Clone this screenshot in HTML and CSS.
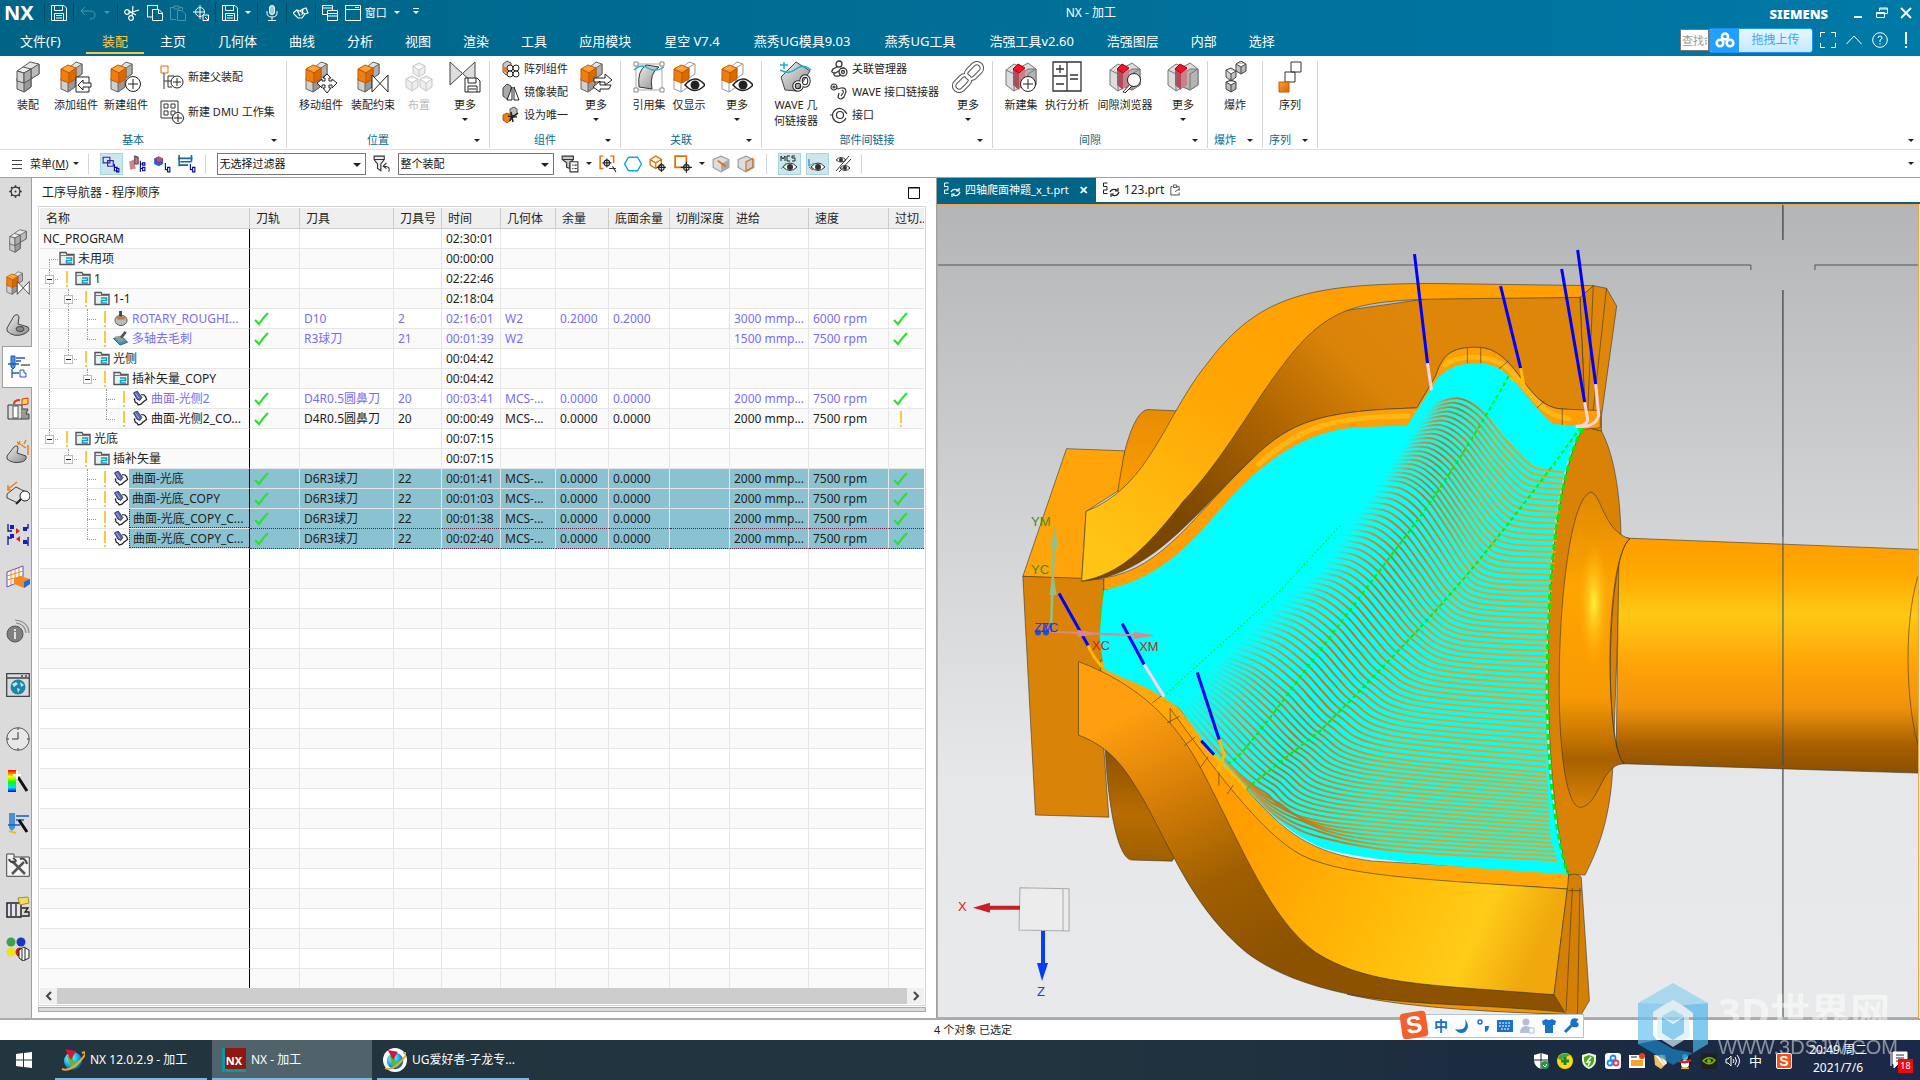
FILE: index.html
```html
<!DOCTYPE html>
<html lang="zh-CN">
<head>
<meta charset="utf-8">
<title>NX - 加工</title>
<link rel="stylesheet" href="styles.css">
</head>
<body>
<svg class="defs" aria-hidden="true">
  <defs>
    <linearGradient id="gOr" x1="0" y1="0" x2="1" y2="1"><stop offset="0" stop-color="#ffa030"/><stop offset="1" stop-color="#d96400"/></linearGradient>
    <linearGradient id="gGr" x1="0" y1="0" x2="1" y2="1"><stop offset="0" stop-color="#eee"/><stop offset="1" stop-color="#8c8c8c"/></linearGradient>
    <linearGradient id="gRain" x1="0" y1="0" x2="0" y2="1"><stop offset="0" stop-color="#f00"/><stop offset=".3" stop-color="#ff0"/><stop offset=".55" stop-color="#0f0"/><stop offset=".8" stop-color="#0df"/><stop offset="1" stop-color="#00f"/></linearGradient>
    <radialGradient id="gBall" cx=".35" cy=".3" r=".8"><stop offset="0" stop-color="#b8f4ff"/><stop offset=".5" stop-color="#18b4f0"/><stop offset="1" stop-color="#0a3c9c"/></radialGradient>
  </defs>
  <symbol id="cubes" viewBox="0 0 32 32"><g stroke="#555" stroke-width="1" stroke-linejoin="round"><path fill="#e6e6e6" d="M11 6 18 1 27 3 27 13 18 18 11 14z"/><path fill="#bbb" d="M19 8 27 3V13L19 18z"/><path fill="#c8c8c8" d="M5 17 12 19 19 16V26L12 31 5 28z"/><path fill="#999" d="M12 20 19 16V26L12 31z"/><path fill="#eee" d="M5 10 11 6 19 8 12 12z"/><path fill="#d4d4d4" d="M5 10 12 12V22L5 20z"/><path fill="#aaa" d="M12 12 19 8V18L12 22z"/></g></symbol>
  <symbol id="cubeso" viewBox="0 0 32 32"><g stroke="#666" stroke-width="1" stroke-linejoin="round"><path fill="#e2e2e2" d="M10 6 16 1 22 3 22 13 16 17 10 14z"/><path fill="#b0b0b0" d="M16 7 22 3V13L16 17z"/><path fill="#d0d0d0" d="M1 17 8 19 15 16V26L8 31 1 28z"/><path fill="#999" d="M8 20 15 16V26L8 31z"/><path fill="#ffa23c" stroke="#c45a00" d="M1 8 8 4 16 7 9 12z"/><path fill="#ef7d10" stroke="#c45a00" d="M1 8 9 12V22L1 19z"/><path fill="#d96a00" stroke="#c45a00" d="M9 12 16 7V18L9 22z"/></g></symbol>
  <symbol id="cubesl" viewBox="0 0 32 32"><g stroke="#999" fill="#fff" stroke-linejoin="round"><path d="M10 6 16 1 22 3 22 13 16 17 10 14zM16 6V17M16 6 22 3M1 17 8 19 15 16V26L8 31 1 28zM8 20V31"/><path fill="#ffa23c" stroke="#c45a00" d="M1 8 8 4 16 7 9 12z"/><path fill="#ef7d10" stroke="#c45a00" d="M1 8 9 12V22L1 19z"/><path fill="#d96a00" stroke="#c45a00" d="M9 12 16 7V18L9 22z"/></g></symbol>
  <symbol id="plus" viewBox="0 0 32 32"><circle cx="23" cy="23" r="7.500" fill="#fff" stroke="#222"/><path d="M23 18V28M18 23H28" stroke="#222" fill="none"/></symbol>
  <symbol id="inarrow" viewBox="0 0 32 32"><path d="M16 16H29V31H16z" fill="#fff" stroke="#222"/><path d="M18 24 23 19V22H31V26H23V29z" fill="#fff" stroke="#222"/></symbol>
  <symbol id="move" viewBox="0 0 32 32"><path d="M22 13 26 17H24V20H27V18L32 22 27 27V24H24V27H26L22 32 18 27H20V24H17V27L12 22 17 18V20H20V17H18z" fill="#fff" stroke="#222"/></symbol>
  <symbol id="bow" viewBox="0 0 32 32"><path d="M15 14V31L31 14V31z" fill="#fff" stroke="#222"/></symbol>
  <symbol id="swap" viewBox="0 0 32 32"><path d="M14 17H25V13L32 19 25 24V21H14zM31 24H20V20L13 26 20 31V28H29z" fill="#fff" stroke="#222"/></symbol>
  <symbol id="eye" viewBox="0 0 32 32"><path d="M12 24Q22 12 32 24 22 35 12 24z" fill="#fff" stroke="#222" stroke-width="1.500"/><circle cx="22" cy="24" r="4.500" fill="#222"/></symbol>
  <symbol id="ghost" viewBox="0 0 32 32"><g fill="#eee" stroke="#c6c6c6"><path d="M16 2 22 5V12L16 16 10 12V5zM9 15 15 18V26L9 30 3 26V18zM23 15 29 18V26L23 30 17 26V18zM10 5 16 9 22 5M16 9V16M3 18 9 22 15 18M9 22V30M17 18 23 22 29 18M23 22V30"/></g></symbol>
  <symbol id="bowsave" viewBox="0 0 32 32"><path d="M1 1V24L26 1V24z" fill="#ddd" stroke="#444"/><path d="M16 17H28L31 20V31H16z" fill="#fff" stroke="#222"/><path d="M19 17V22H27V17M19 31V25H28V31M20 28H27" fill="none" stroke="#222"/></symbol>
  <symbol id="parent" viewBox="0 0 24 24"><path d="M1 1H8V8H1z" fill="#fff" stroke="#e07000"/><path d="M4 8V24M4 16H8M8 11H14V16M8 11V22H12M8 16H14" fill="none" stroke="#333"/><circle cx="17" cy="17" r="6" fill="#fff" stroke="#222"/><path d="M17 13V21M13 17H21" stroke="#222"/></symbol>
  <symbol id="dmu" viewBox="0 0 24 24"><path d="M1 1H18V18H1zM4 4H8V8H4zM11 4H15V8H11zM4 11H8V15H4zM11 11H15V15H11z" fill="#fff" stroke="#333"/><circle cx="18" cy="18" r="5.500" fill="#fff" stroke="#222"/><path d="M18 14V22M14 18H22" stroke="#222"/></symbol>
  <symbol id="pattern" viewBox="0 0 18 18"><path d="M1 4 5 1 9 3V13L4 15 1 12z" fill="#ccc" stroke="#555"/><path d="M1 6 5 8V13L1 11z" fill="#ef7d10"/><g fill="#fff" stroke="#222"><circle cx="8" cy="8" r="3"/><circle cx="14" cy="8" r="3"/><circle cx="8" cy="14" r="3"/><circle cx="14" cy="14" r="3"/></g></symbol>
  <symbol id="mirror" viewBox="0 0 18 18"><path d="M1 5 5 1 9 3V13L5 16 1 13z" fill="#aaa" stroke="#444"/><path d="M10 4V17H5zM12 4V17H17z" fill="#fff" stroke="#222"/></symbol>
  <symbol id="uniq" viewBox="0 0 18 18"><path d="M8 3 12 1 15 3V8L11 10 8 8z" fill="#bbb" stroke="#555"/><path d="M1 9 5 7 9 9V14L5 17 1 14z" fill="#ef7d10" stroke="#b55300"/><path d="M6 10Q11 12 16 7M9 6 11 16M15 11Q9 10 8 15" fill="none" stroke="#222" stroke-width="1.500"/></symbol>
  <symbol id="refset" viewBox="0 0 32 32"><path d="M3 3H29V29H3z" fill="none" stroke="#aaa"/><path d="M6 26Q4 10 13 4L26 6Q16 12 19 28z" fill="url(#gGr)" stroke="#333"/><path d="M1 9Q8 2 15 7T31 6" fill="none" stroke="#1ab0d0" stroke-width="1.500"/><path d="M1 1H5V5H1zM27 1H31V5H27zM1 27H5V31H1zM27 27H31V31H27z" fill="#fff" stroke="#888"/></symbol>
  <symbol id="wave" viewBox="0 0 32 32"><path d="M1 16 16 1 30 10 17 30 5 29z" fill="url(#gGr)" stroke="#444"/><path d="M0 9Q9 14 16 8T31 9M4 1V8M0 4H8" fill="none" stroke="#1ab0d0" stroke-width="1.500"/><g fill="none" stroke="#222" stroke-width="3.500"><ellipse cx="25" cy="20" rx="4" ry="5"/><ellipse cx="18" cy="25" rx="4" ry="4"/></g><g fill="none" stroke="#fff" stroke-width="1.500"><ellipse cx="25" cy="20" rx="4" ry="5"/><ellipse cx="18" cy="25" rx="4" ry="4"/></g></symbol>
  <symbol id="chain" viewBox="0 0 32 32"><g fill="none" stroke="#555" stroke-width="4.500"><rect x="1" y="17" width="18" height="10" rx="5" transform="rotate(-45 10 22)"/><rect x="13" y="5" width="18" height="10" rx="5" transform="rotate(-45 22 10)"/></g><g fill="none" stroke="#fff" stroke-width="2.500"><rect x="1" y="17" width="18" height="10" rx="5" transform="rotate(-45 10 22)"/><rect x="13" y="5" width="18" height="10" rx="5" transform="rotate(-45 22 10)"/></g></symbol>
  <symbol id="link1" viewBox="0 0 18 18"><g fill="none" stroke="#333" stroke-width="1.300"><circle cx="9" cy="4" r="3"/><path d="M7 7 3 9Q0 13 5 13L9 11M4 13Q3 17 9 16L11 14"/><circle cx="13" cy="12" r="4"/><circle cx="13" cy="12" r="1.500"/></g></symbol>
  <symbol id="link2" viewBox="0 0 18 18"><g fill="none" stroke="#333" stroke-width="1.200"><circle cx="4" cy="4" r="3"/><circle cx="4" cy="4" r="1"/><path d="M7 6 11 5Q16 4 16 9L14 14Q10 18 8 14L9 10M12 7Q14 8 13 10L11 13"/></g></symbol>
  <symbol id="link3" viewBox="0 0 18 18"><g fill="none" stroke="#333" stroke-width="1.200"><path d="M16 7A7 7 0 1 0 16 12M0 9H3M15 5 17 8"/><circle cx="10" cy="9" r="3.500"/></g></symbol>
  <symbol id="clear" viewBox="0 0 32 32"><g stroke="#777" stroke-linejoin="round"><path fill="#ddd" d="M1 9 9 3 16 6 23 2 31 8V24L23 29 16 26 9 30 1 24z"/><path fill="#b4b4b4" d="M16 13 23 8 31 8V24L23 29 16 26z"/><path fill="#b44a55" stroke="none" d="M8 8 14 12V29L8 24z"/><path fill="#c8808a" stroke="none" d="M14 12 20 8V24L14 28z"/><path fill="#f4122c" stroke="#a00" d="M8 8 13 3 20 7 14 12z"/><path fill="none" d="M1 9 9 13V30M31 8 23 13V29"/></g></symbol>
  <symbol id="calc" viewBox="0 0 32 32"><path d="M2 1H30V30H2zM16 1V30M2 15H16M5 8H13M9 4V12M5 23H13M19 14H27M19 18H27" fill="none" stroke="#333" stroke-width="1.300"/></symbol>
  <symbol id="mag" viewBox="0 0 32 32"><path d="M22 22 14 31 16 32 24 24z" fill="#fff" stroke="#222"/><circle cx="25" cy="19" r="6.500" fill="#fff" stroke="#222"/></symbol>
  <symbol id="explode" viewBox="0 0 32 32"><g fill="url(#gGr)" stroke="#444"><path d="M17 3 22 0 27 3V10L22 13 17 10zM7 9 12 7 17 10V16L12 20 7 16zM7 21 12 19 17 21V28L12 31 7 28zM17 3 22 6 27 3M22 6V13M7 9 12 13 17 10M12 13V20M7 21 12 24 17 21M12 24V31"/></g></symbol>
  <symbol id="seq" viewBox="0 0 32 32"><path d="M17 1H27V11H17zM11 11H21V21H11z" fill="#fff" stroke="#333"/><path d="M5 21H15V31H5z" fill="url(#gOr)" stroke="#c45a00"/></symbol>

  <symbol id="save" viewBox="0 0 16 16"><path d="M.5.5H13L15.500 3V15.500H.5zM3.500.5V5.500H11.500V.5M3.500 15.500V8.500H12.500V15.500M5 10.500H11M5 13H11" fill="none" stroke="currentColor"/></symbol>
  <symbol id="undo" viewBox="0 0 16 16"><path d="M5 2 1 6 5 10M1 6H10Q15 6 15 10T10 14" fill="none" stroke="currentColor"/></symbol>
  <symbol id="cut" viewBox="0 0 16 16"><g fill="none" stroke="currentColor" stroke-width="1.200"><circle cx="3" cy="7" r="2.300"/><circle cx="7" cy="13" r="2.300"/><path d="M5 8 15 5M8 11 9 1M5 6 12 10"/></g></symbol>
  <symbol id="copy" viewBox="0 0 16 16"><path d="M10.500 4V.5H.5V12H5M5.500 4.500H12L15.500 8V15.500H5.500zM11.500 4.500V8.500H15" fill="none" stroke="currentColor"/></symbol>
  <symbol id="paste" viewBox="0 0 16 16"><path d="M4 2.500H.5V14.500H6M12.500 5V2.500H9M4 1H9V4H4zM7.500 5.500H12L15.500 9V15.500H7.500z" fill="none" stroke="currentColor"/></symbol>
  <symbol id="aim" viewBox="0 0 16 16"><g fill="none" stroke="currentColor"><circle cx="7" cy="7" r="4.500"/><path d="M7 0V14M0 7H11M10 10H15.500V15.500H10zM12 12 15 15"/></g></symbol>
  <symbol id="mic" viewBox="0 0 16 16"><rect x="5.500" y=".5" width="5" height="9" rx="2.500" fill="#9cc" stroke="currentColor"/><path d="M3 6V8Q3 12 8 12T13 8V6M8 12V15M4 15.500H12" fill="none" stroke="currentColor"/></symbol>
  <symbol id="touch" viewBox="0 0 16 16"><path d="M0 8 4 5 7 6 10 4 13 3 15 8 12 9 9 13H5L3 11zM4 5 7 11M7 6 12 9M10 4 9 10" fill="none" stroke="currentColor" stroke-width="1.200"/></symbol>
  <symbol id="wins" viewBox="0 0 16 16"><path d="M5 9.500H.5V.5H10.500V5M.5 3H10.500M5.500 5.500H15.500V15.500H5.500zM5.500 8.500H15.500M5.500 11H15.500" fill="none" stroke="currentColor"/></symbol>
  <symbol id="win" viewBox="0 0 16 16"><path d="M.5.5H15.500V15.500H.5zM.5 4.500H15.500M10 2.500H14" fill="none" stroke="currentColor"/></symbol>
  <symbol id="folder" viewBox="0 0 16 14"><path d="M1 13V1H7L8 3H15V13z" fill="#eceff0" stroke="#555" stroke-width="1.400"/><path d="M1 4H15" stroke="#777"/><path d="M7 6.500H12.500V9H7.500V11.500H13" fill="none" stroke="#0aa2c0" stroke-width="1.500"/></symbol>
  <symbol id="op" viewBox="0 0 16 16"><path d="M3 8 2 9 3 12 5 13 6 15 9 14 11 12 15 9 14 6 12 4 9 4" fill="#fff" stroke="#222" stroke-width="1.300"/><path d="M1 2 5 0 10 7 8 10 5 9z" fill="#5a66c0" stroke="#223" stroke-width=".8"/><path d="M3 2 7 8" stroke="#a8b4f0"/></symbol>
  <symbol id="rough" viewBox="0 0 16 16"><ellipse cx="8" cy="10" rx="6.500" ry="5.500" fill="#bbb" stroke="#555"/><path d="M3 6H13L12 9H4z" fill="#c87838"/><path d="M6 0H9V6H6z" fill="#444"/></symbol>
  <symbol id="burr" viewBox="0 0 16 16"><path d="M0 8 9 6 15 12 7 15z" fill="#2a9fbe" stroke="#357"/><path d="M1 6 7 5 12 10 6 12z" fill="#999"/><path d="M8 7 13 1" stroke="#555" stroke-width="3"/></symbol>
  <symbol id="check" viewBox="0 0 16 14"><path d="M1 8 5 12Q9 6 14 1" fill="none" stroke="#2de02d" stroke-width="2.200"/></symbol>
  <symbol id="bang" viewBox="0 0 4 16"><path d="M1 0H3V12H1zM1 14H3V16H1z" fill="#fdc83c"/></symbol>
  <symbol id="prt" viewBox="0 0 18 16"><path d="M5.500 1H1.500V4.500H5V8H1.500M1.500 8V11.500H5.500" fill="none" stroke="currentColor"/><path d="M8 10Q10 6 15 8M16 6V9H13M17 10Q15 15 10 13M9 15V12H12" fill="none" stroke="currentColor" stroke-width="1.200"/></symbol>
  <symbol id="globe" viewBox="0 0 24 24"><circle cx="12" cy="13" r="9" fill="url(#gBall)"/><path d="M6 8Q12 5 12 10T18 13 14 20Q8 20 8 14z" fill="#55b948"/><path d="M1 21Q9 24 19 13T21 5" fill="none" stroke="#f5a623" stroke-width="2"/><path d="M4 1 15 3 10 12z" fill="#d4163c"/></symbol>

  <symbol id="t1" viewBox="0 0 16 16"><path d="M1 2H7V7H1zM5 5H10V10H5z" fill="#dcdcff" stroke="#2a2a9c"/><path d="M11 8V14H14M11 11H14M13 12H15V15H13z" fill="none" stroke="#0a0a9c"/></symbol>
  <symbol id="t2" viewBox="0 0 16 16"><path d="M1 6 5 4 7 12 2 13z" fill="#c88"/><path d="M6 1 9 2V8H6z" fill="#ef7d10" stroke="#448"/><path d="M11 5V15M11 8H13M11 12H13M13 7H15V9H13zM13 11H15V14H13z" fill="none" stroke="#0a0a9c"/></symbol>
  <symbol id="t3" viewBox="0 0 16 16"><path d="M1 3 5 1 9 3V8L5 10 1 8z" fill="#4455cc"/><path d="M3 2 7 2 8 5 4 6z" fill="#e05030"/><path d="M11 7V13H13M13 11H15V15H13z" fill="none" stroke="#0a0a9c"/></symbol>
  <symbol id="t4" viewBox="0 0 16 16"><path d="M1 0V10M12 0V6M0 3H13M2 6H12M1 9H9" fill="none" stroke="#15699c" stroke-width="1.400"/><path d="M11 8V13H13M13 11H15V15H13z" fill="none" stroke="#0a0a9c"/></symbol>
  <symbol id="fun" viewBox="0 0 16 16"><path d="M1 1H10V4L7 8V14L4 12V8L1 4zM1 4H10" fill="#eee" stroke="#333"/><path d="M14 15Q16 10 10 10M12 7 9 10 12 12" fill="none" stroke="#333"/></symbol>
  <symbol id="fun2" viewBox="0 0 16 16"><path d="M1 1H11V4L8 7V12L5 11V7L1 4zM1 4H11" fill="#ccc" stroke="#333"/><path d="M8 6H15V15H8zM10 9H11M12 9H14M10 12H11M12 12H14" fill="#fff" stroke="#333"/></symbol>
  <symbol id="bra" viewBox="0 0 16 16"><path d="M4 1H1V12H4M10 1H13V7" fill="none" stroke="#e07000" stroke-width="1.300"/><path d="M7 3V11M3 7H11" stroke="#222"/><circle cx="7" cy="7" r="2.500" fill="none" stroke="#222"/><path d="M9 12H15M12 10 15 15" fill="none" stroke="#333"/></symbol>
  <symbol id="hex" viewBox="0 0 16 16"><path d="M4 2H12L15.500 8 12 14H4L.5 8z" fill="none" stroke="#10a8d8" stroke-width="1.300"/></symbol>
  <symbol id="obox" viewBox="0 0 16 16"><path d="M1 4 6 1 11 4V9L6 12 1 9zM1 4 6 7 11 4M6 7V12" fill="#fff" stroke="#e07000" stroke-width="1.200"/><path d="M11 7V15M7 11H15" stroke="#222"/><circle cx="11" cy="11" r="2.500" fill="none" stroke="#222"/></symbol>
  <symbol id="osq" viewBox="0 0 16 16"><path d="M1 1H11V11H1z" fill="#fff" stroke="#e07000" stroke-width="1.500"/><path d="M11 6V16M6 11H16" stroke="#222"/><circle cx="11" cy="11" r="2.500" fill="none" stroke="#222"/></symbol>
  <symbol id="gbox" viewBox="0 0 16 16"><path d="M1 4 8 1 15 4V11L8 15 1 11z" fill="#ddd" stroke="#999"/><path d="M8 8 15 4V11L8 15z" fill="#aaa"/><path d="M5 5 12 10" stroke="#e07000" stroke-width="1.500"/></symbol>
  <symbol id="gbox2" viewBox="0 0 16 16"><path d="M1 4 8 1 15 4V11L8 15 1 11z" fill="#ddd" stroke="#999"/><path d="M8 6 14 3V11L8 14z" fill="#ccc" stroke="#d07030"/></symbol>
  <symbol id="seye" viewBox="0 0 18 18"><path d="M3 12Q10 4 17 12 10 19 3 12z" fill="#fff" stroke="#333"/><circle cx="10" cy="12" r="3" fill="#333"/></symbol>
</svg>

<header class="top">
  <div class="titlebar">
    <div class="quick">
      <b class="nx">NX</b><i class="vs"></i>
      <button aria-label="保存"><svg><use href="#save"/></svg></button><i class="vs"></i>
      <button class="dim" aria-label="撤销"><svg><use href="#undo"/></svg></button><i class="car dim"></i><i class="vs"></i>
      <button aria-label="剪切"><svg><use href="#cut"/></svg></button><button aria-label="复制"><svg><use href="#copy"/></svg></button><button class="dim" aria-label="粘贴"><svg><use href="#paste"/></svg></button><button aria-label="定位"><svg><use href="#aim"/></svg></button><i class="vs"></i>
      <button aria-label="保存列表"><svg><use href="#save"/></svg></button><i class="car"></i><i class="vs"></i>
      <button aria-label="语音"><svg><use href="#mic"/></svg></button><i class="vs"></i>
      <button aria-label="触控"><svg><use href="#touch"/></svg></button><i class="vs"></i>
      <button aria-label="切换窗口"><svg><use href="#wins"/></svg></button><button class="wtext"><svg><use href="#win"/></svg>窗口</button><i class="car"></i><i class="car bar"></i>
    </div>
    <h1>NX - 加工</h1>
    <div class="wincontrols">
      <b class="siemens">SIEMENS</b>
      <button aria-label="最小化"><svg viewBox="0 0 12 12"><path d="M2 10H10" stroke="#fff" stroke-width="2"/></svg></button>
      <button aria-label="还原"><svg viewBox="0 0 12 12"><path d="M3.500 4V1H11.500V6.500H9M.5 5.500H8.500V10.500H.5zM.5 6.500H8.500M3.500 2H11.500" fill="none" stroke="#fff"/></svg></button>
      <button aria-label="关闭"><svg viewBox="0 0 12 12"><path d="M1 1 11 11M11 1 1 11" stroke="#fff" stroke-width="1.800"/></svg></button>
    </div>
  </div>
  <div class="menurow">
    <nav>
      <a href="#" class="file">文件(F)</a><a href="#" class="on">装配</a><a href="#">主页</a><a href="#">几何体</a><a href="#">曲线</a><a href="#">分析</a><a href="#">视图</a><a href="#">渲染</a><a href="#">工具</a><a href="#">应用模块</a><a href="#" class="mix">星空 V7.4</a><a href="#" class="mix">燕秀UG模具9.03</a><a href="#" class="mix">燕秀UG工具</a><a href="#" class="mix">浩强工具v2.60</a><a href="#">浩强图层</a><a href="#">内部</a><a href="#">选择</a>
    </nav>
    <div class="tools">
      <input class="find" type="text" placeholder="查找命令" aria-label="查找命令">
      <button class="upload"><span class="cloud"><svg viewBox="0 0 20 16"><g fill="none" stroke="#fff" stroke-width="2.600"><circle cx="10" cy="4.500" r="3"/><circle cx="5" cy="11" r="3.300"/><circle cx="15" cy="11" r="3.300"/></g></svg></span><span class="uptext">拖拽上传</span></button>
      <button aria-label="全屏"><svg viewBox="0 0 16 16"><path d="M.5 5V.5H5M11 .5H15.500V5M15.500 11V15.500H11M5 15.500H.5V11" fill="none" stroke="#fff"/></svg></button>
      <button aria-label="折叠"><svg viewBox="0 0 16 16"><path d="M.5 12 8 4 15.500 12" fill="none" stroke="#fff"/></svg></button>
      <button aria-label="帮助"><svg viewBox="0 0 16 16"><circle cx="8" cy="8" r="7.300" fill="none" stroke="#fff"/><path d="M6 6Q6 4 8 4T10 6Q10 7 8 8V10M8 11V12.500" fill="none" stroke="#fff"/></svg></button>
      <button aria-label="提示"><svg viewBox="0 0 16 16"><path d="M7 0H9V12H7zM7 14H9V16H7z" fill="#fff"/></svg></button>
    </div>
  </div>
</header>

<section class="ribbon">
  <div class="grp g1"><div class="body">
    <button class="b s"><svg><use href="#cubes"/></svg>装配</button>
    <button class="b s"><svg><use href="#cubeso"/><use href="#inarrow"/></svg>添加组件</button>
    <button class="b"><svg><use href="#cubeso"/><use href="#plus"/></svg>新建组件</button>
    <div class="list two"><button><svg><use href="#parent"/></svg>新建父装配</button><button><svg><use href="#dmu"/></svg>新建 DMU 工作集</button></div>
  </div><div class="cap"><span>基本</span><i class="car"></i></div></div>
  <div class="grp g2"><div class="body">
    <button class="b"><svg><use href="#cubeso"/><use href="#move"/></svg>移动组件</button>
    <button class="b"><svg><use href="#cubeso"/><use href="#bow"/></svg>装配约束</button>
    <button class="b n off" disabled><svg><use href="#ghost"/></svg>布置</button>
    <button class="b more"><svg><use href="#bowsave"/></svg>更多<i class="car"></i></button>
  </div><div class="cap"><span>位置</span><i class="car"></i></div></div>
  <div class="grp g3"><div class="body">
    <div class="list"><button><svg><use href="#pattern"/></svg>阵列组件</button><button><svg><use href="#mirror"/></svg>镜像装配</button><button><svg><use href="#uniq"/></svg>设为唯一</button></div>
    <button class="b more"><svg><use href="#cubeso"/><use href="#swap"/></svg>更多<i class="car"></i></button>
  </div><div class="cap"><span>组件</span><i class="car"></i></div></div>
  <div class="grp g4"><div class="body">
    <button class="b n"><svg><use href="#refset"/></svg>引用集</button>
    <button class="b n"><svg><use href="#cubesl"/><use href="#eye"/></svg>仅显示</button>
    <button class="b more"><svg><use href="#cubesl"/><use href="#eye"/></svg>更多<i class="car"></i></button>
  </div><div class="cap"><span>关联</span><i class="car"></i></div></div>
  <div class="grp g5"><div class="body">
    <button class="b"><svg><use href="#wave"/></svg>WAVE 几<br>何链接器</button>
    <div class="list"><button><svg><use href="#link1"/></svg>关联管理器</button><button><svg><use href="#link2"/></svg>WAVE 接口链接器</button><button><svg><use href="#link3"/></svg>接口</button></div>
    <button class="b more"><svg><use href="#chain"/></svg>更多<i class="car"></i></button>
  </div><div class="cap"><span>部件间链接</span><i class="car"></i></div></div>
  <div class="grp g6"><div class="body">
    <button class="b n"><svg><use href="#clear"/><use href="#plus"/></svg>新建集</button>
    <button class="b"><svg><use href="#calc"/></svg>执行分析</button>
    <button class="b w"><svg><use href="#clear"/><use href="#mag"/></svg>间隙浏览器</button>
    <button class="b more"><svg><use href="#clear"/></svg>更多<i class="car"></i></button>
  </div><div class="cap"><span>间隙</span><i class="car"></i></div></div>
  <div class="grp g7"><div class="body"><button class="b fill"><svg><use href="#explode"/></svg>爆炸</button></div><div class="cap"><span>爆炸</span><i class="car"></i></div></div>
  <div class="grp g7"><div class="body"><button class="b fill"><svg><use href="#seq"/></svg>序列</button></div><div class="cap"><span>序列</span><i class="car"></i></div></div>
  <div class="rest"><i class="car"></i></div>
</section>

<section class="toolbar">
  <button class="menu"><svg viewBox="0 0 10 10"><path d="M0 1.500H10M0 5.500H10M0 9.500H10" stroke="#444"/></svg>菜单(<u>M</u>)<i class="car"></i></button><i class="vs"></i>
  <button class="act" aria-label="显示"><svg><use href="#t1"/></svg></button><button aria-label="层级"><svg><use href="#t2"/></svg></button><button aria-label="体"><svg><use href="#t3"/></svg></button><button aria-label="结构"><svg><use href="#t4"/></svg></button><i class="vs"></i>
  <label class="sel a"><select aria-label="选择过滤器"><option>无选择过滤器</option></select></label>
  <button aria-label="重置过滤器"><svg><use href="#fun"/></svg></button>
  <label class="sel b2"><select aria-label="选择范围"><option>整个装配</option></select></label>
  <button aria-label="过滤"><svg><use href="#fun2"/></svg></button><i class="car"></i>
  <button aria-label="捕捉"><svg><use href="#bra"/></svg></button><button aria-label="多边形"><svg><use href="#hex"/></svg></button><button aria-label="体选择"><svg><use href="#obox"/></svg></button><button aria-label="矩形选择"><svg><use href="#osq"/></svg></button><i class="car"></i>
  <button aria-label="边"><svg><use href="#gbox"/></svg></button><button aria-label="面"><svg><use href="#gbox2"/></svg></button><i class="vs wide"></i>
  <button class="act" aria-label="MCS 显示"><svg viewBox="0 0 18 18"><use href="#seye"/><path d="M1 6V1L3 4 5 1V6M10 1H7V6H10M15 1H12V3H15V6H12" fill="none" stroke="#222"/><path d="M1 14 6 8" stroke="#1c3"/></svg></button>
  <button class="act" aria-label="WCS 显示"><svg viewBox="0 0 18 18"><use href="#seye"/><path d="M1 4V11" stroke="#1b6fd0"/><path d="M1 11 6 8" stroke="#1c3"/><path d="M1 12 5 15" stroke="#d22"/></svg></button>
  <button aria-label="隐藏"><svg viewBox="0 0 18 18"><path d="M2 5Q7 0 12 5 7 9 2 5zM6 13Q11 8 16 13 11 18 6 13zM2 16 15 1M5 17 17 4" fill="none" stroke="#333"/><circle cx="7" cy="5" r="2" fill="#333"/><circle cx="11" cy="13" r="2" fill="#333"/></svg></button><i class="vs"></i>
  <i class="car end"></i>
</section>

<main>
  <aside class="rail">
    <button class="gear" aria-label="设置"><svg viewBox="0 0 24 24"><circle cx="12" cy="12" r="7" fill="none" stroke="#333" stroke-width="2"/><circle cx="12" cy="12" r="1.500" fill="#333"/><path d="M12 2V5M12 19V22M2 12H5M19 12H22M5 5 7 7M17 17 19 19M19 5 17 7M7 17 5 19" stroke="#333" stroke-width="2.500"/></svg></button>
    <button class="gap" aria-label="装配导航器"><svg><use href="#cubes"/></svg></button>
    <button aria-label="约束导航器"><svg><use href="#cubeso"/><use href="#bow"/></svg></button>
    <button aria-label="部件导航器"><svg viewBox="0 0 24 24"><path d="M1 15 8 3Q12 0 13 4L12 11 22 14Q25 18 18 21 8 25 1 18z" fill="url(#gGr)" stroke="#444"/><ellipse cx="14" cy="16" rx="4" ry="2.500" fill="#888" stroke="#444"/></svg></button>
    <button class="cur" aria-label="工序导航器"><svg viewBox="0 0 24 24"><path d="M4 1H8V12L6 14 4 12z" fill="#4a90d8" stroke="#1a5aa8"/><path d="M9 3H18M9 6H14M1 9H12M5 14V23M5 18H12" fill="none" stroke="#2058c0" stroke-width="1.300"/><path d="M14 10H23" stroke="#111"/><path d="M13 15H17V18H19V22H13z" fill="none" stroke="#2058c0"/></svg></button>
    <button aria-label="机床导航器"><svg viewBox="0 0 24 24"><path d="M2 8H16V22H2z" fill="#ddd" stroke="#333"/><path d="M7 9H12V21H7z" fill="#fff" stroke="#555"/><path d="M8 7Q8 3 14 3" fill="none" stroke="#e03a10" stroke-width="2"/><path d="M16 2 22 1V7L16 8z" fill="#ffd050" stroke="#e03a10"/><path d="M16 12H22L20 17H23V22H16" fill="#999" stroke="#444"/></svg></button>
    <button aria-label="加工特征"><svg viewBox="0 0 24 24"><path d="M1 17 8 8Q12 5 12 10L11 14 20 17Q21 22 15 23 7 25 1 20z" fill="url(#gGr)" stroke="#444"/><path d="M11 3 20 9M22 6V16M14 2 12 6M20 1 18 5" fill="none" stroke="#e88020" stroke-width="1.500"/></svg></button>
    <button aria-label="测量"><svg viewBox="0 0 24 24"><path d="M1 13 10 6 22 12 12 22 1 17z" fill="#ddd" stroke="#444"/><path d="M2 8 11 1M2 4V9H5" fill="none" stroke="#e88020" stroke-width="1.500"/><circle cx="19" cy="15" r="5" fill="#fff" stroke="#222"/><path d="M15 18 10 23" stroke="#222" stroke-width="2"/></svg></button>
    <button aria-label="比较"><svg viewBox="0 0 24 24"><path d="M2 1V8H6M2 13V22M2 15H6M22 1V5H18M22 14V23M22 20H18" fill="none" stroke="#11118c" stroke-width="1.300"/><path d="M4 2H8V6H4zM4 11H8V15H4zM17 4H21V8H17zM17 17H21V21H17z" fill="#1420b8"/><path d="M10 5 14 8 10 11zM14 13 10 16 14 19z" fill="#d42a10"/></svg></button>
    <button aria-label="数据"><svg viewBox="0 0 24 24"><path d="M1 7 17 1V15L1 22z" fill="#fff" stroke="#6a4ab8"/><path d="M1 11 17 6M1 15 17 11M5 6V20M9 4V18M13 3V16" stroke="#f08a20"/><path d="M8 14 14 11 24 14V19L18 23 8 19z" fill="#f08a20"/><path d="M18 17 24 14V19L18 23z" fill="#1a6ae0"/></svg></button>
    <button class="gap2" aria-label="信息"><svg viewBox="0 0 24 24"><circle cx="9" cy="15" r="8" fill="#808080" stroke="#555"/><path d="M9 10V12M9 13V20" stroke="#fff" stroke-width="1.500"/><path d="M10 4Q19 5 20 14M9 1Q22 2 23 14" fill="none" stroke="#888" stroke-width="1.200"/></svg></button>
    <button class="gap2" aria-label="浏览器"><svg viewBox="0 0 24 24"><path d="M.7.7H23.300V23.300H.7zM1 5H23M15 3H17M19 3H21" fill="none" stroke="#444" stroke-width="1.300"/><circle cx="12" cy="14" r="7.500" fill="#1c84a8"/><path d="M6 11 10 9 12 11 8 14zM14 9 18 12 15 14zM11 15 14 16 12 20z" fill="#b8e4f0"/></svg></button>
    <button class="gap2" aria-label="历史"><svg viewBox="0 0 24 24"><circle cx="12" cy="12" r="11.300" fill="#e8e8e8" stroke="#555"/><path d="M12 5V12H6M12 1V3M12 21V23M1 12H3M21 12H23" fill="none" stroke="#333"/></svg></button>
    <button aria-label="颜色"><svg viewBox="0 0 24 24"><path d="M2 1H10V23H2z" fill="url(#gRain)"/><path d="M12 8 21 22" stroke="#111" stroke-width="3"/><path d="M11 2V10M7 6H15" stroke="#fff" stroke-width="2"/></svg></button>
    <button aria-label="向导"><svg viewBox="0 0 24 24"><path d="M3 2H9V17L6 20 3 17z" fill="#4a90d8"/><path d="M10 5H23M10 9H18M2 14H14" stroke="#2058c0" stroke-width="1.500"/><path d="M13 9 21 21" stroke="#111" stroke-width="3"/><path d="M3 20 10 22" stroke="#e8c020" stroke-width="2"/></svg></button>
    <button aria-label="工具"><svg viewBox="0 0 24 24"><path d="M.7 23.300V1H8V4H23.300V23.300z" fill="#f4f4f4" stroke="#444"/><path d="M6 8 19 21M18 9 6 21" stroke="#555" stroke-width="2.500"/><path d="M3 6Q4 10 8 9T7 5M14 6Q19 4 21 11" fill="none" stroke="#444" stroke-width="2"/></svg></button>
    <button aria-label="机床库"><svg viewBox="0 0 24 24"><path d="M1 8H15V22H1z" fill="#e4e4ee" stroke="#222" stroke-width="1.500"/><path d="M5 9V21M10 9V21M16 13H22L19 17H23V21H16" fill="none" stroke="#222" stroke-width="1.300"/><path d="M12 3 22 2 23 8 14 10z" fill="#f0dc60" stroke="#a89020"/></svg></button>
    <button aria-label="颜色库"><svg viewBox="0 0 24 24"><circle cx="5" cy="5" r="4.500" fill="#3fa04a"/><circle cx="15" cy="5" r="4.500" fill="#1a36c8"/><circle cx="5" cy="15" r="4.500" fill="#f0e018"/><circle cx="14" cy="15" r="4.500" fill="#d01a1a"/><path d="M13 13 18 10 23 13V21L17 24 13 21zM16 12V23M19 11V23" fill="#fff" stroke="#222"/></svg></button>
  </aside>
  <section class="panel">
    <div class="phead"><h2>工序导航器 - 程序顺序</h2><button aria-label="最大化"><svg viewBox="0 0 12 12"><path d="M.5.5H11.500V11.500H.5zM0 1H12" fill="none" stroke="#111"/></svg></button></div>
    <div class="frame">
      <div class="scroll">
        <table>
          <colgroup><col class="c1"><col class="c2"><col class="c3"><col class="c4"><col class="c5"><col class="c6"><col class="c7"><col class="c8"><col class="c9"><col class="c10"><col class="c11"><col></colgroup>
          <thead><tr><th>名称</th><th>刀轨</th><th>刀具</th><th>刀具号</th><th>时间</th><th>几何体</th><th>余量</th><th>底面余量</th><th>切削深度</th><th>进给</th><th>速度</th><th>过切..</th></tr></thead>
          <tbody id="rows"></tbody>
        </table>
      </div>
      <div class="hbar"><button aria-label="向左"><svg viewBox="0 0 8 10"><path d="M6 1 2 5 6 9" fill="none" stroke="#444" stroke-width="2"/></svg></button><div class="thumb"></div><button aria-label="向右"><svg viewBox="0 0 8 10"><path d="M2 1 6 5 2 9" fill="none" stroke="#444" stroke-width="2"/></svg></button></div>
    </div>
    <div class="strip"></div>
  </section>
  <section class="view">
    <div class="vtabs"><button class="on"><svg><use href="#prt"/></svg>四轴爬面神题_x_t.prt<b>✕</b></button><button><svg><use href="#prt"/></svg>123.prt<svg class="doc" viewBox="0 0 12 14"><path d="M8 3H11V8M11 10V13H1V3H3M4 1H8V4H4zM6 9 11 6" fill="none" stroke="#333"/></svg></button></div>
    <div class="canvas">
      <svg viewBox="938 205 979 811" preserveAspectRatio="xMidYMid slice" role="img" aria-label="刀轨模型">
        <defs>
          <linearGradient id="shaft" x1="0" y1="0" x2="0" y2="1"><stop offset="0" stop-color="#ff9d00"/><stop offset=".15" stop-color="#ffa800"/><stop offset=".33" stop-color="#ffc814"/><stop offset=".55" stop-color="#ffa208"/><stop offset=".72" stop-color="#f0930c"/><stop offset=".88" stop-color="#a86000"/><stop offset="1" stop-color="#8a5000"/></linearGradient>
          <linearGradient id="band" gradientUnits="userSpaceOnUse" x1="700" y1="200" x2="300" y2="700"><stop offset="0" stop-color="#ff9f00"/><stop offset=".5" stop-color="#ffa604"/><stop offset="1" stop-color="#ffc414"/></linearGradient>
          <linearGradient id="wall" gradientUnits="userSpaceOnUse" x1="400" y1="640" x2="800" y2="300"><stop offset="0" stop-color="#7a4600"/><stop offset=".45" stop-color="#b06600"/><stop offset=".75" stop-color="#d98308"/><stop offset="1" stop-color="#de860a"/></linearGradient>
          <linearGradient id="low" gradientUnits="userSpaceOnUse" x1="300" y1="1000" x2="560" y2="1450"><stop offset="0" stop-color="#ff9f10"/><stop offset=".3" stop-color="#d98008"/><stop offset=".65" stop-color="#a06000"/><stop offset="1" stop-color="#8c5200"/></linearGradient>
          <linearGradient id="dish" gradientUnits="userSpaceOnUse" x1="480" y1="1250" x2="960" y2="1440"><stop offset="0" stop-color="#ff9d00"/><stop offset=".5" stop-color="#ffba08"/><stop offset=".8" stop-color="#ffcc18"/><stop offset="1" stop-color="#f0a80c"/></linearGradient>
          <linearGradient id="ear" x1="0" y1="0" x2="0" y2="1"><stop offset="0" stop-color="#e88c04"/><stop offset="1" stop-color="#ff9f00"/></linearGradient>
          <linearGradient id="ear2" x1="0" y1="0" x2="0" y2="1"><stop offset="0" stop-color="#885000"/><stop offset=".6" stop-color="#b86c00"/><stop offset="1" stop-color="#a06000"/></linearGradient>
          <radialGradient id="shine"><stop offset="0" stop-color="#fff03c"/><stop offset="1" stop-color="#ffb000" stop-opacity="0"/></radialGradient>
          <linearGradient id="flare" x1="0" y1="0" x2="0" y2="1"><stop offset="0" stop-color="#e08804"/><stop offset=".3" stop-color="#ffa400"/><stop offset=".65" stop-color="#f89a04"/><stop offset=".85" stop-color="#a86000"/><stop offset="1" stop-color="#d98406"/></linearGradient>
          <linearGradient id="fade"><stop offset="0" stop-color="#c9a060" stop-opacity="0"/><stop offset=".12" stop-color="#c8903c"/><stop offset=".25" stop-color="#c07414"/><stop offset=".5" stop-color="#e89c18"/><stop offset="1" stop-color="#ff9e08"/></linearGradient>
        </defs>
        <path d="M938 265H1750M1750 265V270M1814 270V265H1917" fill="none" stroke="#555"/>
        <path d="M1782 205V240M1782 290V537M1782 765V1016" stroke="#222"/>
        <g transform="matrix(.6316 0 0 .5357 930 180)" class="edges">
          <path fill="url(#ear)" d="M296 580C300 540 318 430 345 428L420 432V600z"/>
          <path fill="url(#ear2)" d="M277 1050C280 1150 295 1268 320 1268L383 1270 420 1200 340 1080z"/>
          <path fill="#ffa50a" d="M216 501 308 505 297 580 247 618 240 745 147 739z"/>
          <path fill="#d98408" d="M147 739 275 744V1060L283 1188 167 1184z"/>
          <path fill="#d98206" d="M1062 468C1085 520 1092 600 1093 668L1080 1095C1075 1200 1055 1250 1036 1296L1008 1295C985 1190 972 1000 980 800 985 650 1005 510 1035 460z"/>
          <path fill="url(#shaft)" d="M1090 665 1107 668 1567 689V1106L1085 1088z"/>
          <path fill="url(#flare)" d="M1045 582C1062 585 1065 655 1107 669 1070 700 1065 1060 1098 1088 1060 1090 1060 1165 1028 1170 975 1160 990 600 1045 582z"/>
          <ellipse cx="1050" cy="790" rx="24" ry="120" fill="url(#shine)" stroke="none"/>
          <path fill="none" d="M1107 669C1065 710 1068 1060 1098 1088M1567 725C1540 800 1540 980 1567 1070"/>
          <path fill="#de870a" d="M1028 219 1049 197 1070 202 1086 235 1062 440V468L1035 460z"/>
          <path fill="none" d="M1049 197 1040 440M1070 202 1048 440M1028 219 1036 430"/>
          <path fill="url(#wall)" d="M240 748C350 740 420 620 510 520 570 450 620 430 770 425L800 365C812 320 830 312 865 312 930 312 940 425 1000 427L1036 430 1028 219H800L560 260z"/>
          <path fill="url(#band)" d="M247 618C350 570 370 440 440 340 520 215 600 193 800 193L1049 197 1028 219 800 222C680 225 640 240 590 300 520 390 480 500 400 600 340 690 300 735 240 748z"/>
          <path fill="#ff9f08" d="M275 742C370 725 420 620 510 520 570 450 620 430 770 425L800 365C812 320 830 312 865 312 930 312 940 425 1000 427L1060 430V462L900 480 400 750 275 765z"/>
          <path class="glow" d="M520 530C590 455 640 443 755 440M815 345C830 325 900 320 925 365 950 400 970 440 1010 445"/>
          <path fill="none" d="M850 312V342M871 312V342M915 337 900 352M972 412 960 425M1000 427V457"/>
          <path fill="#ffa808" d="M270 895C330 930 380 960 405 1000L500 1135C560 1215 600 1255 700 1270L1010 1290V1322C800 1305 640 1310 560 1240L430 1110C380 1020 330 960 270 925z"/>
          <path fill="url(#dish)" d="M380 985C480 1150 540 1230 590 1260 660 1300 800 1305 1008 1322L987 1519 800 1530 600 1470 480 1330 380 1080z"/>
          <path fill="url(#low)" d="M235 898C330 940 390 1010 430 1100 500 1260 540 1380 610 1440 690 1500 780 1500 987 1519L1006 1555C780 1545 600 1530 500 1440 420 1360 390 1270 340 1160 310 1100 290 1060 235 1035z"/>
          <path fill="#f0960c" d="M660 1518C760 1540 860 1535 1006 1552L1022 1556C820 1550 720 1535 660 1518z"/>
          <path fill="#d48004" d="M1010 1297Q1022 1290 1030 1300L1043 1530 1030 1556H1006L987 1519 1008 1322z"/>
          <path fill="none" d="M1016 1320 1006 1550M1028 1320 1024 1555M1010 1325H1030M352 975 368 960M395 1000 375 1012M402 1055 420 1038M428 1095 440 1075M457 1130V1105M470 1145 480 1128"/>
          <path fill="#0ff" stroke="none" d="M275 765C380 740 430 650 470 600 530 520 600 465 680 461L755 458 800 375C820 345 840 342 870 342 920 342 940 410 985 455L1035 460C1005 500 985 620 980 760 970 900 970 1150 1008 1295 880 1282 700 1275 620 1245 560 1215 520 1160 500 1135L460 1090 395 985 370 965C330 935 290 925 275 910L268 850z"/>
        </g>
        <g id="paths"></g>
        <g class="green">
          <path d="M1508 376Q1455 470 1402 540T1290 690 1228 761"/>
          <path d="M1580 427Q1520 510 1470 570T1320 730L1246 788"/>
          <path class="thin" d="M1340 525 1280 590 1164 695"/>
          <path class="fat" d="M1583 428C1566 450 1552 530 1549 600 1544 690 1545 800 1567 873"/>
          <path class="thin" d="M1103 590Q1098 625 1100 668"/>
        </g>
        <g fill="none" stroke-width="3">
          <path stroke="#00f" d="M1414 254 1427 363M1500 286 1520 368M1561 269 1584 402M1577 250 1595 384M1059 593 1088 645M1122 623 1144 664M1197 672 1219 739M1201 740 1214 754"/>
          <path stroke="#fdd5e0" d="M1427 363 1431 390M1584 402 1587 420Q1586 425 1577 426M1595 384 1598 415Q1595 428 1575 426M1144 664 1164 696"/>
          <path stroke="#fb0" d="M1520 368 1523 384 1510 378M1088 645Q1093 657 1102 666M1219 739 1224 755 1217 770M1214 754 1246 788"/>
        </g>
        <g stroke="#8fc08f" fill="#8fc08f"><path stroke-width="2.500" d="M1051 628 1054 540"/><path d="M1051 547 1055 528 1057 547zM1050 594 1053 575 1056 594z"/></g>
        <g stroke="#d88" fill="#d88"><path stroke-width="2" d="M1046 631 1140 635"/><path d="M1134 632 1153 635 1134 638zM1078 630 1098 633 1078 636z"/></g>
        <circle cx="1038" cy="632" r="3" fill="#2a4fc8"/><circle cx="1046" cy="632" r="3" fill="#2a4fc8"/>
        <g class="axes"><text x="1031" y="526" fill="#3a9020">YM</text><text x="1031" y="574" fill="#3a9020">YC</text><text x="1034" y="631" fill="#1a3cf0">ZM</text><text x="1041" y="631" fill="#1a3cf0">ZC</text><text x="1092" y="649" fill="#d42020">XC</text><text x="1139" y="650" fill="#d42020">XM</text><text x="958" y="910" fill="#e02020">X</text><text x="1037" y="995" fill="#1a3cf0">Z</text></g>
        <path d="M1020 887 1069 888V930L1019 929zM1063 888V930" fill="#ececed" stroke="#aaa"/>
        <path d="M990 905H1020V909H990V912L973 907 990 902z" fill="#c81e28"/><path d="M1041 930H1045V962H1048L1042 980 1037 962H1041z" fill="#0a3cf0"/>
        <path d="M1782 537V765" stroke="#2a5070"/>
      </svg>
    </div>
  </section>
</main>
<div class="status"><span>4 个对象 已选定</span>
  <div class="ime"><span class="s">S</span><b>中</b><svg viewBox="0 0 16 16"><path d="M11 1Q14 14 1 11 5 17 11 14 17 9 11 1z" fill="#1a72c8"/></svg><svg viewBox="0 0 16 16"><circle cx="4" cy="4" r="2" fill="none" stroke="#1a72c8" stroke-width="1.500"/><path d="M9 8H13Q13 13 9 14z" fill="#1a72c8"/></svg><svg viewBox="0 0 16 16"><path d="M0 2H16V14H0z" fill="#1a72c8"/><path d="M2 5H14M2 8H14M4 11H12" stroke="#fff" stroke-dasharray="2 1"/></svg><svg viewBox="0 0 16 16"><circle cx="7" cy="4" r="3.500" fill="#b4bed4"/><path d="M1 15Q1 8 7 8T13 15z" fill="#b4bed4"/><path d="M10 10H15V15H10z" fill="#fff" stroke="#b4bed4"/></svg><svg viewBox="0 0 16 16"><path d="M1 3 5 1Q8 3 11 1L15 3 14 7H12V15H4V7H2z" fill="#1a72c8"/></svg><svg viewBox="0 0 16 16"><path d="M2 14 9 7M9 7Q8 1 13 2L11 5 14 6Q15 9 9 7" fill="none" stroke="#1a72c8" stroke-width="3"/></svg></div>
</div>
<footer class="taskbar">
  <button class="start" aria-label="开始"><svg viewBox="0 0 16 16"><path d="M0 2 7 1V7.500H0zM8 1 16 0V7.500H8zM0 8.500H7V15L0 14zM8 8.500H16V16L8 15z" fill="#fff"/></svg></button>
  <button class="app"><svg><use href="#globe"/></svg>NX 12.0.2.9 - 加工</button>
  <button class="app on"><span class="nxi">NX</span>NX - 加工</button>
  <button class="app"><svg viewBox="0 0 24 24"><circle cx="12" cy="12" r="12" fill="#fff"/><use href="#globe" x="1" y="1" width="22" height="22"/></svg>UG爱好者-子龙专...</button>
  <div class="tray">
    <svg viewBox="0 0 16 16"><path d="M8 0 15 2V8Q14 14 8 16 2 14 1 8V2z" fill="#fff"/><path d="M8 0V16M1 7H15" stroke="#222"/><circle cx="12" cy="12" r="4" fill="#1a9c4a"/><path d="M10 12 12 14 14 11" stroke="#fff" fill="none"/></svg>
    <svg viewBox="0 0 16 16"><circle cx="8" cy="8" r="8" fill="#ffd814"/><path d="M1 5A8 8 0 0 1 13 2L3 7z" fill="#38a838"/><path d="M8 4V12M4 8H12" stroke="#18862c" stroke-width="3"/></svg>
    <svg viewBox="0 0 16 16"><path d="M8 0 15 2V8Q14 14 8 16 2 14 1 8V2z" fill="#e8f4e0"/><path d="M8 2 13 4V8Q12 12 8 14 4 12 3 8V4z" fill="#4aa818"/><path d="M10 4 6 9H9L7 13" stroke="#fff" stroke-width="1.500" fill="none"/></svg>
    <svg viewBox="0 0 16 16"><rect width="16" height="16" rx="3" fill="#fff"/><g fill="none" stroke-width="1.800"><circle cx="8" cy="5" r="2.500" stroke="#1a8cf0"/><circle cx="5" cy="10" r="2.500" stroke="#1a8cf0"/><circle cx="11" cy="10" r="2.500" stroke="#e83a5a"/></g></svg>
    <svg viewBox="0 0 16 16"><path d="M0 2H16V15H0z" fill="#fff"/><path d="M2 7H14V13H2z" fill="#ffa428"/><path d="M2 4H8" stroke="#222"/><circle cx="13" cy="3" r="3" fill="#f03a10"/></svg>
    <svg viewBox="0 0 16 16"><path d="M1 2H12L14 10 8 16 2 12z" fill="#f4c060"/><path d="M4 3 11 12M8 2 13 11" stroke="#fff" stroke-width="2"/></svg>
    <svg viewBox="0 0 16 16"><ellipse cx="8" cy="8" rx="6" ry="8" fill="#16202c"/><ellipse cx="8" cy="11" rx="4" ry="4" fill="#fff"/><path d="M2 8Q8 11 14 7" stroke="#e02020" stroke-width="2.500" fill="none"/><path d="M4 15.500H12" stroke="#f4a820" stroke-width="2"/><circle cx="8" cy="4" r="3" fill="#5ac0e8"/></svg>
    <svg viewBox="0 0 16 16"><path d="M0 0H16V16H0z" fill="#1e2220"/><path d="M2 8Q7 2 14 7 9 14 2 8z" fill="none" stroke="#76b900" stroke-width="1.500"/><circle cx="8" cy="8" r="2" fill="#76b900"/></svg>
    <svg viewBox="0 0 16 16"><path d="M1 6H3L6 3V13L3 10H1zM8 6Q10 8 8 10M10 4Q13 8 10 12M12 2Q17 8 12 14" fill="none" stroke="#fff"/></svg>
    <b>中</b>
    <span class="sg">S</span>
  </div>
  <div class="clock">20:49 周二<br>2021/7/6</div>
  <button class="note" aria-label="通知"><svg viewBox="0 0 18 18"><path d="M1 1V15M3 1H17V13H8L4 17V13H3z" fill="#fff" stroke="#fff"/><path d="M6 4H14M6 7H14M6 10H11" stroke="#223"/></svg><em>18</em></button>
</footer>
<div class="mark">
  <svg viewBox="0 0 72 82"><path d="M36 0 71 20 45 22 36 17 18 27 1 20z" fill="#8fd0f0"/><path d="M1 20 28 21 16 29V52L25 64 1 61z" fill="#6cc0ee"/><path d="M71 20V61L56 70V30L45 22z" fill="#4cb4ec"/><path d="M1 61 36 82 71 61 56 70 36 66 20 57z" fill="#1a86c8"/><path d="M20 30 36 21 52 30V54L36 64 20 54z" fill="#d8eefa"/><path d="M25 34 36 41V57L25 50zM47 34 36 41V57L47 50z" fill="#5cb8ea"/><path d="M25 33 36 27 47 33 36 39z" fill="#8fd0f0"/></svg>
  <div><strong>3D世界网</strong><span>WWW.3DSJW.COM</span></div>
</div>
<script src="app.js"></script>
</body>
</html>
```
FILE: styles.css
```css
* { box-sizing: border-box; }
body { margin: 0; min-height: 100vh; height: 100vh; display: flex; flex-direction: column; overflow: hidden; background: #fff; color: #1e1e1e; font: 12px/16px "Noto Sans", "Noto Sans CJK SC", sans-serif; }
button { font: inherit; color: inherit; background: none; border: 0; padding: 0; margin: 0; }
svg { display: block; flex: none; }
a { color: inherit; text-decoration: none; }
h1, h2 { font-size: 12px; font-weight: 400; margin: 0; }
.defs { position: absolute; width: 0; height: 0; }
.car { border: 4px solid transparent; border-top-color: currentColor; border-bottom: 0; width: 8px; height: 4px; flex: none; }

.top { background: linear-gradient(90deg, #006487, #0079a6); color: #fff; flex: none; }
.titlebar { height: 26px; display: grid; grid-template-columns: 57fr auto 43fr; align-items: center; }
.quick { display: flex; align-items: center; gap: 7px; padding-left: 4px; }
.quick svg { width: 16px; height: 16px; }
.quick .vs { width: 1px; height: 20px; background: #044c66; margin: 0 -1px; }
.quick .dim { opacity: .3; }
.quick .car { border-width: 3px; border-bottom: 0; width: 6px; }
.quick .car.dim { margin: 0 1px; }
.quick .bar { position: relative; margin-left: 6px; }
.quick .bar::before { content: ""; position: absolute; left: -3px; top: -6px; width: 6px; height: 1px; background: #fff; }
.nx { font-size: 20px; line-height: 24px; margin-right: 4px; }
.wtext { display: flex; align-items: center; gap: 4px; font-size: 11px; }
.wincontrols { display: flex; justify-content: flex-end; align-items: center; gap: 12px; padding-right: 8px; }
.wincontrols svg { width: 12px; height: 12px; }
.siemens { font: 900 13px/16px "Noto Sans", sans-serif; margin-right: 12px; padding-top: 2px; }
.menurow { height: 30px; display: flex; justify-content: space-between; align-items: stretch; font-size: 13px; }
nav { display: flex; }
nav a { padding: 6px 16px 0; height: 28px; white-space: nowrap; line-height: 18px; }
nav .file { width: 82px; padding-left: 20px; margin-right: 4px; }
nav .mix { padding-left: 17px; padding-right: 17px; }
nav .on { color: #ffc840; border-bottom: 2px solid #ffc840; }
.tools { display: flex; align-items: center; gap: 10px; padding-right: 6px; padding-bottom: 2px; }
.tools > button > svg { width: 16px; height: 16px; }
.find { width: 29px; height: 22px; border: 1px solid #777; padding: 0 1px; font: inherit; font-size: 11px; background: #fff; }
.find::placeholder { color: #999; }
.upload { display: flex; margin-left: -10px; margin-right: -3px; height: 25px; border: 1px solid #1a94ff; border-radius: 3px; overflow: hidden; background: linear-gradient(#e8f6ff, #c4eaff); color: #3ea4f5; font-size: 12px; align-items: center; }
.cloud { background: #22a0ff; width: 29px; height: 25px; display: grid; place-items: center; }
.upload .cloud svg { width: 20px; height: 16px; }
.uptext { width: 73px; }

.ribbon { height: 94px; flex: none; display: flex; border-bottom: 1px solid #ddd; font-size: 11px; line-height: 16px; padding-top: 5px; padding-bottom: 1px; }
.grp { display: flex; flex-direction: column; border-right: 1px solid #d4d4d4; flex: none; }
.g1 { width: 287px; } .g2 { width: 203px; } .g3 { width: 131px; } .g4 { width: 141px; } .g5 { width: 231px; } .g6 { width: 215px; } .g7 { width: 55px; }
.body { display: flex; flex: 1; padding-left: 8px; min-height: 0; }
.g7 .body { padding: 0; }
.g1 .body { padding-left: 4px; }
.b { width: 52px; display: flex; flex-direction: column; align-items: center; justify-content: flex-start; white-space: nowrap; }
.b svg { width: 32px; height: 32px; margin-bottom: 4px; }
.b .car { border-width: 3px; border-bottom: 0; width: 6px; margin-top: 5px; }
.b.s { width: 48px; } .b.n { width: 40px; } .b.w { width: 64px; } .b.fill { width: 100%; }
.b.more { width: 48px; margin-left: auto; }
.off { color: #bbb; }
.list { display: flex; flex-direction: column; gap: 7px; padding: 0 4px; }
.list button { display: flex; align-items: center; gap: 4px; white-space: nowrap; height: 16px; }
.list svg { width: 18px; height: 18px; }
.g5 .list { padding-left: 8px; }
.list.two { gap: 11px; padding: 4px 0 0 8px; }
.two button { height: 24px; }
.two svg { width: 24px; height: 24px; }
.cap { display: grid; grid-template-columns: 1fr 20px; align-items: center; text-align: center; color: #0a6a8c; height: 16px; flex: none; }
.cap .car, .rest .car, .toolbar .car { color: #222; border-width: 3px; border-bottom: 0; width: 6px; height: 3px; }
.cap .car { margin-left: 5px; }
.rest { flex: 1; display: flex; justify-content: flex-end; align-items: flex-end; padding: 0 6px 6px 0; }

.toolbar { height: 28px; flex: none; border-bottom: 1px solid #a0a0a0; display: flex; align-items: center; gap: 7px; padding-left: 12px; font-size: 11px; }
.toolbar button svg { width: 18px; height: 18px; }
.toolbar .menu { display: flex; align-items: center; }
.toolbar .menu svg { width: 10px; height: 10px; margin-right: 8px; }
.toolbar .menu .car { margin-left: 4px; }
.toolbar .vs { width: 1px; height: 20px; background: #d4d4d4; margin: 0 4px 0 2px; }
.toolbar .wide { margin-left: 4px; }
.act { width: 23px; height: 22px; background: #cbe6ec; border: 1px solid #a8d4de; display: grid; place-items: center; margin-right: -4px; }
.act + button { margin-left: 2px; }
.end { margin-left: auto; margin-right: 6px; }
.sel { position: relative; display: block; height: 22px; flex: none; }
.sel select { appearance: none; width: 100%; height: 22px; border: 1px solid #777; border-radius: 0; background: #fff; font: inherit; color: #111; padding: 0 2px; }
.sel::after { content: ""; position: absolute; right: 5px; top: 10px; border: 4px solid transparent; border-top-color: #222; border-bottom: 0; }
.sel.a { width: 149px; } .sel.b2 { width: 156px; }

main { flex: 1; min-height: 0; display: grid; grid-template-columns: 32px minmax(0, 905fr) minmax(0, 983fr); border-bottom: 2px solid #aaa; }
.rail { background: #dbdbdb; border-right: 1px solid #a0a0a0; display: flex; flex-direction: column; min-height: 0; }
.rail button { height: 42px; flex: none; display: grid; place-items: center; padding-left: 4px; }
.rail svg { width: 24px; height: 24px; }
.rail .gear { height: 26px; padding: 0; }
.rail .gear svg { width: 15px; height: 15px; }
.rail .gap { margin-top: 16px; } .rail .gap2 { margin-top: 12px; }
.rail .cur { background: #fff; border: 1px solid #a0a0a0; border-right: 0; margin-left: 2px; margin-right: -1px; padding-left: 2px; }

.panel { display: flex; flex-direction: column; min-height: 0; border-right: 1px solid #a0a0a0; padding: 0 10px 6px 6px; }
.phead { height: 28px; flex: none; display: flex; justify-content: space-between; align-items: center; padding: 2px 6px 0 4px; }
.phead svg { width: 12px; height: 12px; }
.frame { flex: 1; min-height: 0; border: 1px solid #d4d4d4; padding: 1px; display: flex; flex-direction: column; }
.scroll { flex: 1; min-height: 0; overflow: hidden; }
table { width: 100%; table-layout: fixed; border-collapse: separate; border-spacing: 0; }
.c1 { width: 210px; } .c2 { width: 50px; } .c3 { width: 94px; } .c4 { width: 48px; } .c5 { width: 59px; } .c6 { width: 55px; } .c7 { width: 53px; } .c8 { width: 61px; } .c9 { width: 60px; } .c10 { width: 79px; } .c11 { width: 80px; }
th { height: 21px; padding: 2px 0 0 6px; text-align: left; font-weight: 400; background: #efefef; border-right: 1px solid #ccc; border-bottom: 1px solid #ccc; white-space: nowrap; overflow: hidden; }
td { height: 20px; padding: 0 0 0 4px; border-right: 1px solid #e6e6e6; border-bottom: 1px solid #e6e6e6; white-space: nowrap; overflow: hidden; line-height: 19px; }
th:last-child, td:last-child { border-right: 0; }
td:first-child { border-right-color: #000; padding: 0; }
tr:nth-child(even) td { background: #fafafa; }
.blue td { color: #7a6cf8; }
.picked td:not(:first-child) { background: #8bc2d1; }
.picked:nth-child(even) td:first-child, .picked td:first-child { background: #fff; }
.picked .nm { background: #8bc2d1; }
.focus td:not(:first-child), .focus .nm { border-bottom: 1px dotted #602040; }
.focus .nm { border-left: 1px dotted #602040; }
.tree { display: flex; height: 19px; align-items: center; }
.nm { flex: 1; padding-left: 3px; height: 19px; }
.g { width: 19px; height: 20px; flex: none; position: relative; }
.g.v::before, .g.t::before, .g.l::before, .g.r::before, .g.e::before { content: ""; position: absolute; left: 9px; top: 0; bottom: 0; border-left: 1px dotted #999; }
.g.l::before, .g.e.z::before { bottom: 10px; }
.g.r::before { top: 10px; }
.g.t::after, .g.l::after, .g.r::after, .g.e::after { content: ""; position: absolute; left: 9px; right: 1px; top: 10px; border-top: 1px dotted #999; }
.g button { position: absolute; z-index: 1; left: 5px; top: 6px; width: 9px; height: 9px; border: 1px solid #bbb; background: #fff; }
.g button::before { content: ""; position: absolute; left: 1px; right: 1px; top: 3px; height: 1px; background: #222; }
.tree .bang { width: 16px; height: 16px; flex: none; }
.tree .ic { width: 16px; height: 15px; }
td > .check { width: 16px; height: 14px; }
td > .bang { width: 16px; height: 16px; }
.hbar { height: 16px; flex: none; display: flex; background: #f0f0f0; }
.hbar button { width: 17px; display: grid; place-items: center; }
.hbar svg { width: 8px; height: 10px; }
.thumb { flex: 1; background: #cdcdcd; }
.strip { height: 5px; flex: none; margin-top: 1px; background: #dbdbdb; border: 1px solid #aaa; }

.view { display: flex; flex-direction: column; min-height: 0; min-width: 0; }
.vtabs { height: 26px; flex: none; display: flex; border-bottom: 2px solid #006487; line-height: 24px; }
.vtabs button { display: flex; align-items: center; gap: 4px; padding: 0 6px; font-size: 12px; white-space: nowrap; }
.vtabs .on { background: #006487; color: #fff; font-size: 11px; padding-right: 8px; }
.vtabs svg { width: 18px; height: 16px; }
.vtabs .doc { width: 10px; height: 12px; margin-left: 2px; }
.vtabs b { margin-left: 6px; }
.canvas { flex: 1; min-height: 0; margin-right: 1px; border: 1px solid #f7a04b; background: linear-gradient(#b4b5b6, #cfd0d2 35%, #e6e7e9 70%, #e8e9ea); }
.canvas svg { width: 100%; height: 100%; }
.edges path { stroke: #333; stroke-width: 1px; }
.edges path[stroke="none"] { stroke: none; }
.edges .glow { fill: none; stroke: #ffd024; stroke-width: 9px; opacity: .5; stroke-linecap: round; }
#paths path { fill: none; stroke: url(#fade); stroke-width: 2px; }
.green path { fill: none; stroke: #0e0; stroke-width: 2px; stroke-dasharray: 4 3; }
.green .thin { stroke-width: 1px; stroke-dasharray: 2 2; }
.green .fat { stroke-width: 3px; stroke-dasharray: 6 4; }
.axes { font: 13px "Liberation Sans", sans-serif; }

.status { height: 20px; flex: none; display: flex; align-items: center; padding-left: 934px; font-size: 11px; position: relative; background: #fff; }
.ime { position: absolute; z-index: 2; right: 336px; bottom: 2px; height: 24px; width: 180px; background: #fbfdff; border: 1px solid #b4c4d8; display: flex; align-items: center; justify-content: space-between; padding: 0 4px 0 29px; color: #1a72c8; }
.ime svg { width: 16px; height: 16px; }
.ime b { font-size: 14px; }
.ime .s { position: absolute; left: -4px; bottom: -1px; width: 26px; height: 26px; border-radius: 4px; background: #f4602c; color: #fff; font: bold 24px/26px "Liberation Sans", sans-serif; text-align: center; transform: rotate(-8deg); }

.taskbar { height: 40px; flex: none; display: flex; background: linear-gradient(90deg, #22363f, #22343f 55%, #1c2c40 78%, #1b2848); color: #fff; align-items: stretch; }
.start { width: 48px; display: grid; place-items: center; }
.start svg { width: 16px; height: 16px; }
.app { width: 152px; margin-left: 7px; display: flex; align-items: center; gap: 5px; padding: 2px 0 0 6px; border-bottom: 2px solid #76b9ed; white-space: nowrap; }
.app + .app { margin-left: 5px; }
.app svg { width: 24px; height: 24px; }
.app.on { background: #50636b; width: 160px; padding-left: 10px; }
.nxi { width: 24px; height: 24px; background: linear-gradient(#901810, #901810) 100% 0/21px 21px no-repeat #0a9a9a; font-weight: 700; font-size: 11px; line-height: 26px; text-align: center; }
.tray { margin-left: auto; display: flex; align-items: center; gap: 8px; padding-top: 1px; }
.tray svg { width: 16px; height: 16px; }
.tray b { font-size: 13px; font-weight: 400; }
.sg { margin-left: 6px; width: 16px; height: 16px; background: #f4501e; border: 1px solid #fff; border-radius: 2px; font: bold 14px/14px "Liberation Sans", sans-serif; text-align: center; }
.clock { width: 92px; text-align: center; line-height: 18px; padding-top: 1px; }
.note { width: 36px; position: relative; padding-left: 6px; }
.note svg { width: 18px; height: 18px; }
.note em { position: absolute; left: 14px; top: 19px; background: #e80c0c; font: 9px/14px "Noto Sans", sans-serif; width: 15px; }

.mark { position: fixed; right: 26px; bottom: 15px; width: 257px; height: 82px; display: flex; gap: 9px; opacity: .7; pointer-events: none; z-index: 3; }
.mark svg { width: 72px; height: 82px; flex: none; }
.mark div { display: flex; flex-direction: column; color: #fff; opacity: .7; white-space: nowrap; padding-top: 2px; }
.mark strong { font-size: 40px; line-height: 54px; }
.mark span { font: 20px/16px "Liberation Sans", sans-serif; }
```
FILE: app.js
```js
// Operation navigator rows: guides, icon, name, state, tool, number, time, geometry, stock, floor stock, feed, speed, gouge check, flags
const rows = [
  ['', '', 'NC_PROGRAM', '', '', '', '02:30:01'],
  ['r', 'folder-', '未用项', '', '', '', '00:00:00'],
  ['e', 'folder', '1', '', '', '', '02:22:46'],
  ['ve', 'folder', '1-1', '', '', '', '02:18:04'],
  ['vvt', 'rough', 'ROTARY_ROUGHI...', 1, 'D10', '2', '02:16:01', 'W2', '0.2000', '0.2000', '3000 mmp...', '6000 rpm', 1, 'blue'],
  ['vvl', 'burr', '多轴去毛刺', 1, 'R3球刀', '21', '00:01:39', 'W2', '', '', '1500 mmp...', '7500 rpm', 1, 'blue'],
  ['vz', 'folder', '光侧', '', '', '', '00:04:42'],
  ['v z', 'folder', '插补矢量_COPY', '', '', '', '00:04:42'],
  ['v  t', 'op', '曲面-光侧2', 1, 'D4R0.5圆鼻刀', '20', '00:03:41', 'MCS-...', '0.0000', '0.0000', '2000 mmp...', '7500 rpm', 1, 'blue'],
  ['v  l', 'op', '曲面-光侧2_CO...', 1, 'D4R0.5圆鼻刀', '20', '00:00:49', 'MCS-...', '0.0000', '0.0000', '2000 mmp...', '7500 rpm', 2, ''],
  ['z', 'folder', '光底', '', '', '', '00:07:15'],
  [' z', 'folder', '插补矢量', '', '', '', '00:07:15'],
  ['  t', 'op', '曲面-光底', 1, 'D6R3球刀', '22', '00:01:41', 'MCS-...', '0.0000', '0.0000', '2000 mmp...', '7500 rpm', 1, 'picked'],
  ['  t', 'op', '曲面-光底_COPY', 1, 'D6R3球刀', '22', '00:01:03', 'MCS-...', '0.0000', '0.0000', '2000 mmp...', '7500 rpm', 1, 'picked'],
  ['  t', 'op', '曲面-光底_COPY_C...', 1, 'D6R3球刀', '22', '00:01:38', 'MCS-...', '0.0000', '0.0000', '2000 mmp...', '7500 rpm', 1, 'picked focus'],
  ['  l', 'op', '曲面-光底_COPY_C...', 1, 'D6R3球刀', '22', '00:02:40', 'MCS-...', '0.0000', '0.0000', '2000 mmp...', '7500 rpm', 1, 'picked focus'],
];
const use = (id, cls) => `<svg class="${cls}"><use href="#${id}"/></svg>`;
const mark = s => s === 1 ? use('check', 'check') : s === 2 ? use('bang', 'bang') : '';
const guide = c => c === 'e' || c === 'z'
  ? `<span class="g e ${c}"><button aria-label="折叠"></button></span>`
  : `<span class="g ${c}"></span>`;
const tbody = document.getElementById('rows');
let html = rows.map(r => {
  const [g, ic, name, st, tool, no, time, geo = '', a = '', b = '', feed = '', speed = '', chk = '', flag = ''] = r;
  const bang = ic && ic !== 'folder-' ? use('bang', 'bang') : '';
  const icon = ic ? use(ic.replace('-', ''), 'ic') : '';
  const tree = `<div class="tree">${[...g].map(guide).join('')}${bang}${icon}<span class="nm">${name}</span></div>`;
  const cells = [tree, mark(st), tool, no, time, geo, a, b, '', feed, speed, mark(chk)];
  return `<tr class="${flag}">${cells.map(c => `<td>${c}</td>`).join('')}</tr>`;
}).join('');
// Blank rows run on to the bottom of the list
const blanks = Math.max(0, Math.ceil((document.querySelector('.scroll').clientHeight - 21) / 20) - rows.length);
html += `<tr>${'<td></td>'.repeat(12)}</tr>`.repeat(blanks);
tbody.innerHTML = html;

// Cutter passes are blended between key passes, from the blade edge to the hub
const keys = [
  [[1430,405],[1457,398],[1480,410],[1505,440],[1530,465],[1545,470],[1563,472]],
  [[1380,480],[1405,483],[1427,500],[1448,530],[1470,563],[1492,577],[1552,580]],
  [[1320,567],[1345,572],[1367,588],[1390,615],[1413,640],[1450,660],[1546,667]],
  [[1220,655],[1255,668],[1287,693],[1305,712],[1325,730],[1375,755],[1546,772]],
  [[1178,702],[1200,730],[1228,762],[1245,778],[1265,792],[1320,820],[1550,838]],
  [[1250,793],[1262,805],[1278,820],[1300,834],[1330,845],[1410,856],[1558,864]],
];
const counts = [19, 16, 19, 15, 6];
const smooth = p => {
  let d = `M${p[0]}`;
  for (let i = 0; i < p.length - 1; i++) {
    const a = p[i - 1] || p[i], b = p[i], c = p[i + 1], e = p[i + 2] || c;
    d += `C${b[0] + (c[0] - a[0]) / 6} ${b[1] + (c[1] - a[1]) / 6} ${c[0] - (e[0] - b[0]) / 6} ${c[1] - (e[1] - b[1]) / 6} ${c[0]} ${c[1]}`;
  }
  return d;
};
let out = '';
counts.forEach((n, k) => {
  for (let i = 0; i < n; i++) {
    const t = i / n;
    out += `<path d="${smooth(keys[k].map((p, j) => [0, 1].map(m => p[m] + (keys[k + 1][j][m] - p[m]) * t)))}"/>`;
  }
});
document.getElementById('paths').innerHTML = out;
```
